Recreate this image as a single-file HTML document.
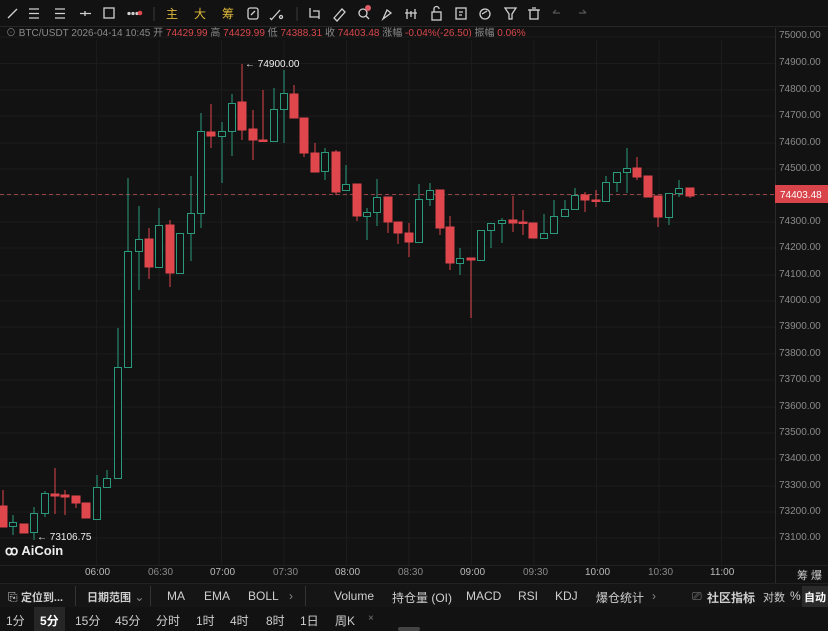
<!DOCTYPE html>
<html><head><meta charset="utf-8"><style>
*{margin:0;padding:0;box-sizing:border-box}
body{width:828px;height:631px;background:#121213;overflow:hidden;font-family:"Liberation Sans","Noto Sans CJK SC",sans-serif;color:#ccc;position:relative}
.tb{position:absolute;left:0;top:0;width:828px;height:27px;border-bottom:1px solid #262626;background:#121213}
.tb span{position:absolute;top:5px;font-size:12px;color:#d0d0d0}
.info{position:absolute;left:6px;top:27px;font-size:10px;color:#8a8a8a;white-space:nowrap;line-height:13px}
.info .r{color:#d9484c}
.ax{position:absolute;right:0;font-size:10px;color:#8a8a8a;width:53px;text-align:left;padding-left:4px}
.tx{position:absolute;top:567px;font-size:10px;color:#8a8a8a}
.bar1{position:absolute;left:0;top:583px;width:828px;height:24px;background:#151516;border-top:1px solid #222;font-size:12px;color:#cfcfcf}
.bar1 span,.bar2 span{position:absolute;top:5px;white-space:nowrap}
.bar2{position:absolute;left:0;top:607px;width:828px;height:24px;background:#121213;font-size:12px;color:#cfcfcf}
.sep{position:absolute;top:2px;width:1px;height:20px;background:#333}
b{font-weight:bold}
</style></head><body>
<div class="tb">
<svg width="828" height="27" style="position:absolute;left:0;top:0" fill="none" stroke="#d0d0d0" stroke-width="1.3">
<line x1="8" y1="18" x2="17" y2="9"/>
<path d="M29 9h10M29 13.5h10M29 18h10"/>
<path d="M55 9h10M55 13.5h10M55 18h10"/>
<path d="M80 13.5h11M85 11v5"/>
<rect x="104" y="8" width="10" height="10"/>
<circle cx="129" cy="13.5" r="1" fill="#d0d0d0"/><circle cx="133" cy="13.5" r="1" fill="#d0d0d0"/><circle cx="137" cy="13.5" r="1" fill="#d0d0d0"/><circle cx="140" cy="13" r="2.3" fill="#e0474c" stroke="none"/>
<line x1="154" y1="7" x2="154" y2="21" stroke="#333"/>
<rect x="248" y="8" width="10" height="11" rx="2"/><path d="M251 15l4-4"/>
<path d="M272 19l8-9M270 18l2 2"/><circle cx="281" cy="17" r="1.5"/>
<line x1="297" y1="7" x2="297" y2="21" stroke="#333"/>
<path d="M310 8v9h9M313 11h6v8"/>
<path d="M334 18l8-9 3 3-8 9z"/>
<circle cx="363" cy="13" r="4"/><path d="M366 16l3 3"/><circle cx="368" cy="8" r="3" fill="#e05a6a" stroke="none"/>
<path d="M383 19l4-9 4 3z"/>
<path d="M407 9v10M411 11v6M415 9v10M405 13h12"/>
<rect x="432" y="12" width="9" height="8"/><path d="M434 12v-3a2.5 2.5 0 0 1 5 0"/>
<rect x="456" y="8" width="10" height="11"/><path d="M459 12h4M459 15h3"/>
<circle cx="485" cy="14" r="5"/><path d="M482 14l5-3"/>
<path d="M505 8h11l-4 6v5h-3v-5z"/>
<rect x="530" y="10" width="8" height="9"/><path d="M528 10h12M532 8h4"/>
<path d="M553 13l3-3M553 13h7" stroke="#555"/><path d="M586 13l-3-3M586 13h-7" stroke="#555"/>
</svg>
<span style="left:166px;color:#e0b83a">主</span><span style="left:194px;color:#e0b83a">大</span><span style="left:222px;color:#e0b83a">筹</span>
</div>
<div class="info"><span style="color:#777">⊙</span> BTC/USDT 2026-04-14 10:45 开 <span class="r">74429.99</span> 高 <span class="r">74429.99</span> 低 <span class="r">74388.31</span> 收 <span class="r">74403.48</span> 涨幅 <span class="r">-0.04%(-26.50)</span> 振幅 <span class="r">0.06%</span></div>

<svg width="828" height="583" style="position:absolute;left:0;top:0">
<g stroke="#1c1c1e" stroke-width="1">
<path d="M0 63.5H775M0 90H775M0 116H775M0 143H775M0 169H775M0 222H775M0 248H775M0 275H775M0 301H775M0 327H775M0 354H775M0 380H775M0 407H775M0 433H775M0 459H775M0 486H775M0 512H775M0 538H775M0 37H775M0 195H775"/>
<path d="M96.5 40V565M159 40V565M221.5 40V565M284 40V565M346.5 40V565M409 40V565M471.5 40V565M534 40V565M596.5 40V565M659 40V565M721.5 40V565"/>
</g>
<line x1="775.5" y1="28" x2="775.5" y2="583" stroke="#2a2a2a"/>
<line x1="0" y1="565.5" x2="828" y2="565.5" stroke="#222"/>
<line x1="0" y1="194.5" x2="775" y2="194.5" stroke="#c05055" stroke-dasharray="4 3" stroke-width="0.8"/>
<g stroke="#e0474c" fill="#e0474c">
<line x1="3" y1="490" x2="3" y2="527"/><rect x="-1" y="506" width="8" height="21"/>
<line x1="24" y1="524" x2="24" y2="533"/><rect x="20" y="524" width="8" height="9"/>
<line x1="55" y1="468" x2="55" y2="514"/><rect x="51" y="494" width="8" height="2"/>
<line x1="65" y1="490" x2="65" y2="515"/><rect x="61" y="495" width="8" height="2"/>
<line x1="76" y1="496" x2="76" y2="508"/><rect x="72" y="496" width="8" height="7"/>
<line x1="86" y1="503" x2="86" y2="518"/><rect x="82" y="503" width="8" height="15"/>
<line x1="149" y1="228" x2="149" y2="279"/><rect x="145" y="239" width="8" height="28"/>
<line x1="170" y1="220" x2="170" y2="287"/><rect x="166" y="225" width="8" height="48"/>
<line x1="211" y1="104" x2="211" y2="148"/><rect x="207" y="132" width="8" height="4"/>
<line x1="242" y1="64" x2="242" y2="140"/><rect x="238" y="102" width="8" height="28"/>
<line x1="253" y1="110" x2="253" y2="160"/><rect x="249" y="129" width="8" height="11"/>
<line x1="263" y1="90" x2="263" y2="141"/><rect x="259" y="140" width="8" height="1.5"/>
<line x1="294" y1="85" x2="294" y2="118"/><rect x="290" y="94" width="8" height="24"/>
<line x1="304" y1="118" x2="304" y2="157"/><rect x="300" y="118" width="8" height="35"/>
<line x1="315" y1="143" x2="315" y2="172"/><rect x="311" y="153" width="8" height="19"/>
<line x1="336" y1="150" x2="336" y2="195"/><rect x="332" y="152" width="8" height="40"/>
<line x1="357" y1="184" x2="357" y2="221"/><rect x="353" y="184" width="8" height="32"/>
<line x1="388" y1="197" x2="388" y2="233"/><rect x="384" y="197" width="8" height="25"/>
<line x1="398" y1="222" x2="398" y2="244"/><rect x="394" y="222" width="8" height="11"/>
<line x1="409" y1="223" x2="409" y2="257"/><rect x="405" y="233" width="8" height="9"/>
<line x1="440" y1="190" x2="440" y2="235"/><rect x="436" y="190" width="8" height="38"/>
<line x1="450" y1="216" x2="450" y2="270"/><rect x="446" y="227" width="8" height="36"/>
<line x1="471" y1="258" x2="471" y2="318"/><rect x="467" y="258" width="8" height="2"/>
<line x1="513" y1="196" x2="513" y2="232"/><rect x="509" y="220" width="8" height="3"/>
<line x1="523" y1="210" x2="523" y2="235"/><rect x="519" y="222" width="8" height="1.5"/>
<line x1="533" y1="223" x2="533" y2="238"/><rect x="529" y="223" width="8" height="15"/>
<line x1="585" y1="192" x2="585" y2="212"/><rect x="581" y="195" width="8" height="5"/>
<line x1="596" y1="190" x2="596" y2="207"/><rect x="592" y="200" width="8" height="1.5"/>
<line x1="637" y1="157" x2="637" y2="180"/><rect x="633" y="168" width="8" height="9"/>
<line x1="648" y1="176" x2="648" y2="197"/><rect x="644" y="176" width="8" height="21"/>
<line x1="658" y1="196" x2="658" y2="227"/><rect x="654" y="196" width="8" height="21"/>
<line x1="690" y1="188" x2="690" y2="198"/><rect x="686" y="188" width="8" height="8"/>
</g>
<g stroke="#2b9a7c" fill="#121213">
<line x1="13" y1="515" x2="13" y2="535"/><rect x="9.5" y="522.5" width="7" height="4"/>
<line x1="34" y1="507" x2="34" y2="540"/><rect x="30.5" y="513.5" width="7" height="19"/>
<line x1="45" y1="491" x2="45" y2="517"/><rect x="41.5" y="493.5" width="7" height="20"/>
<line x1="97" y1="475" x2="97" y2="519"/><rect x="93.5" y="487.5" width="7" height="32"/>
<line x1="107" y1="470" x2="107" y2="487"/><rect x="103.5" y="478.5" width="7" height="9"/>
<line x1="118" y1="328" x2="118" y2="478"/><rect x="114.5" y="367.5" width="7" height="111"/>
<line x1="128" y1="178" x2="128" y2="367"/><rect x="124.5" y="251.5" width="7" height="116"/>
<line x1="139" y1="206" x2="139" y2="290"/><rect x="135.5" y="239.5" width="7" height="12"/>
<line x1="159" y1="208" x2="159" y2="267"/><rect x="155.5" y="225.5" width="7" height="42"/>
<line x1="180" y1="233" x2="180" y2="273"/><rect x="176.5" y="233.5" width="7" height="40"/>
<line x1="191" y1="176" x2="191" y2="261"/><rect x="187.5" y="213.5" width="7" height="20"/>
<line x1="201" y1="113" x2="201" y2="228"/><rect x="197.5" y="131.5" width="7" height="82"/>
<line x1="222" y1="122" x2="222" y2="183"/><rect x="218.5" y="131.5" width="7" height="5"/>
<line x1="232" y1="94" x2="232" y2="156"/><rect x="228.5" y="103.5" width="7" height="28"/>
<line x1="274" y1="88" x2="274" y2="141"/><rect x="270.5" y="109.5" width="7" height="32"/>
<line x1="284" y1="70" x2="284" y2="143"/><rect x="280.5" y="93.5" width="7" height="16"/>
<line x1="325" y1="148" x2="325" y2="180"/><rect x="321.5" y="152.5" width="7" height="19"/>
<line x1="346" y1="165" x2="346" y2="190"/><rect x="342.5" y="184.5" width="7" height="6"/>
<line x1="367" y1="208" x2="367" y2="240"/><rect x="363.5" y="212.5" width="7" height="4"/>
<line x1="377" y1="179" x2="377" y2="226"/><rect x="373.5" y="197.5" width="7" height="15"/>
<line x1="419" y1="184" x2="419" y2="242"/><rect x="415.5" y="199.5" width="7" height="43"/>
<line x1="430" y1="183" x2="430" y2="206"/><rect x="426.5" y="190.5" width="7" height="9"/>
<line x1="460" y1="248" x2="460" y2="275"/><rect x="456.5" y="258.5" width="7" height="5"/>
<line x1="481" y1="230" x2="481" y2="260"/><rect x="477.5" y="230.5" width="7" height="30"/>
<line x1="491" y1="223" x2="491" y2="248"/><rect x="487.5" y="223.5" width="7" height="7"/>
<line x1="502" y1="218" x2="502" y2="243"/><rect x="498.5" y="220.5" width="7" height="3"/>
<line x1="544" y1="214" x2="544" y2="238"/><rect x="540.5" y="233.5" width="7" height="5"/>
<line x1="554" y1="200" x2="554" y2="233"/><rect x="550.5" y="216.5" width="7" height="17"/>
<line x1="565" y1="200" x2="565" y2="216"/><rect x="561.5" y="209.5" width="7" height="7"/>
<line x1="575" y1="188" x2="575" y2="209"/><rect x="571.5" y="195.5" width="7" height="14"/>
<line x1="606" y1="176" x2="606" y2="201"/><rect x="602.5" y="182.5" width="7" height="19"/>
<line x1="617" y1="172" x2="617" y2="192"/><rect x="613.5" y="172.5" width="7" height="10"/>
<line x1="627" y1="148" x2="627" y2="193"/><rect x="623.5" y="168.5" width="7" height="4"/>
<line x1="669" y1="193" x2="669" y2="225"/><rect x="665.5" y="193.5" width="7" height="24"/>
<line x1="679" y1="180" x2="679" y2="197"/><rect x="675.5" y="188.5" width="7" height="5"/>
</g>
<rect x="775" y="185" width="53" height="18" fill="#d9434a"/>
<text x="780" y="198" fill="#fff" font-size="10" font-family="Liberation Sans">74403.48</text>
<text x="245" y="67" fill="#eee" font-size="10" font-family="Liberation Sans">← 74900.00</text>
<text x="37" y="540" fill="#eee" font-size="10" font-family="Liberation Sans">← 73106.75</text>
<text x="5" y="555" fill="#eee" font-size="13" font-weight="bold" font-family="Liberation Sans">ꝏ AiCoin</text>
</svg>

<div class="ax" style="top:30px">75000.00</div><div class="ax" style="top:57px">74900.00</div><div class="ax" style="top:84px">74800.00</div><div class="ax" style="top:110px">74700.00</div><div class="ax" style="top:137px">74600.00</div><div class="ax" style="top:163px">74500.00</div><div class="ax" style="top:216px">74300.00</div><div class="ax" style="top:242px">74200.00</div><div class="ax" style="top:269px">74100.00</div><div class="ax" style="top:295px">74000.00</div><div class="ax" style="top:321px">73900.00</div><div class="ax" style="top:348px">73800.00</div><div class="ax" style="top:374px">73700.00</div><div class="ax" style="top:401px">73600.00</div><div class="ax" style="top:427px">73500.00</div><div class="ax" style="top:453px">73400.00</div><div class="ax" style="top:480px">73300.00</div><div class="ax" style="top:506px">73200.00</div><div class="ax" style="top:532px">73100.00</div>

<div class="tx" style="left:85px;color:#bbb">06:00</div><div class="tx" style="left:148px">06:30</div><div class="tx" style="left:210px;color:#bbb">07:00</div><div class="tx" style="left:273px">07:30</div><div class="tx" style="left:335px;color:#bbb">08:00</div><div class="tx" style="left:398px">08:30</div><div class="tx" style="left:460px;color:#bbb">09:00</div><div class="tx" style="left:523px">09:30</div><div class="tx" style="left:585px;color:#bbb">10:00</div><div class="tx" style="left:648px">10:30</div><div class="tx" style="left:710px;color:#bbb">11:00</div>
<div class="tx" style="left:797px;font-size:11px;color:#ccc">筹 爆</div>

<div class="bar1">
<span style="left:8px">⎘ <b style="font-size:11px">定位到...</b></span><div class="sep" style="left:75px"></div>
<span style="left:87px"><b style="font-size:11px">日期范围</b> <span style="position:static;color:#888">⌄</span></span><div class="sep" style="left:150px"></div>
<span style="left:167px">MA</span><span style="left:204px">EMA</span><span style="left:248px">BOLL</span><span style="left:289px;color:#888">›</span><div class="sep" style="left:305px"></div>
<span style="left:334px">Volume</span><span style="left:392px">持仓量 (OI)</span><span style="left:466px">MACD</span><span style="left:518px">RSI</span><span style="left:555px">KDJ</span><span style="left:596px">爆仓统计</span><span style="left:652px;color:#888">›</span>
<span style="left:692px;color:#888">⎚</span><span style="left:707px"><b>社区指标</b></span><span style="left:763px;font-size:11px">对数</span><span style="left:790px">%</span>
<span style="left:802px;top:2px;background:#2a2a2b;padding:3px 2px;font-size:11px;color:#fff"><b>自动</b></span>
</div>
<div class="bar2">
<span style="left:6px">1分</span><span style="left:34px;top:0;height:24px;background:#262627;padding:5px 6px;color:#fff"><b>5分</b></span><span style="left:75px">15分</span><span style="left:115px">45分</span><span style="left:156px">分时</span><span style="left:196px">1时</span><span style="left:230px">4时</span><span style="left:266px">8时</span><span style="left:300px">1日</span><span style="left:335px">周K</span><span style="left:368px;color:#777;font-size:10px;top:6px">×</span>
<div style="position:absolute;left:398px;top:20px;width:22px;height:4px;background:#444;border-radius:2px"></div>
</div>
</body></html>
